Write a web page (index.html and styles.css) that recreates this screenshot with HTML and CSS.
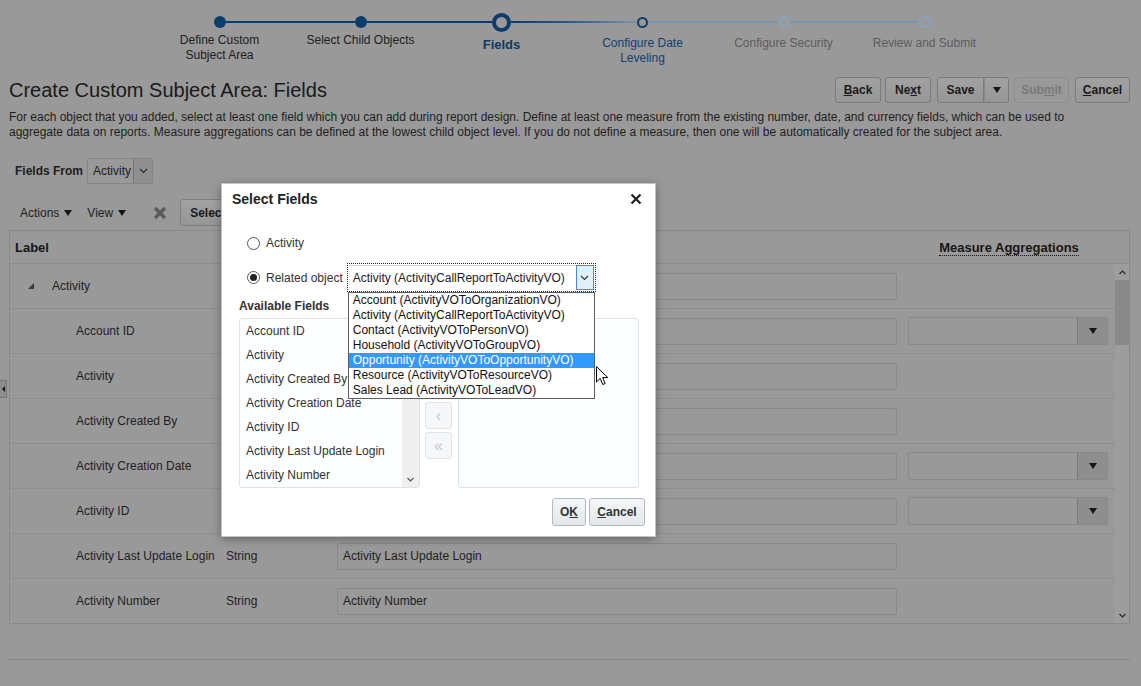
FILE: index.html
```html
<!DOCTYPE html>
<html lang="en">
<head>
  <meta charset="UTF-8">
  <title>Create Custom Subject Area: Fields</title>
  <link rel="stylesheet" href="styles.css">
</head>
<body>

  <!-- Train -->
  <div class="train">
    <div class="step">
      <div class="track"><span class="line none"></span><span class="dot done"></span><span class="line dark"></span></div>
      <div class="step-label done">Define Custom<br>Subject Area</div>
    </div>
    <div class="step">
      <div class="track"><span class="line dark"></span><span class="dot done"></span><span class="line dark"></span></div>
      <div class="step-label done">Select Child Objects</div>
    </div>
    <div class="step">
      <div class="track"><span class="line dark"></span><span class="dot current"></span><span class="line fade-out"></span></div>
      <div class="step-label current">Fields</div>
    </div>
    <div class="step">
      <div class="track"><span class="line fade-in"></span><span class="dot next"></span><span class="line light"></span></div>
      <div class="step-label next">Configure Date<br>Leveling</div>
    </div>
    <div class="step">
      <div class="track"><span class="line light"></span><span class="dot todo"></span><span class="line light"></span></div>
      <div class="step-label todo">Configure Security</div>
    </div>
    <div class="step">
      <div class="track"><span class="line light"></span><span class="dot todo"></span><span class="line none"></span></div>
      <div class="step-label todo">Review and Submit</div>
    </div>
  </div>

  <!-- Header -->
  <div class="page-head">
    <h1>Create Custom Subject Area: Fields</h1>
    <div class="head-buttons">
      <button class="btn back"><u>B</u>ack</button>
      <button class="btn next">Ne<u>x</u>t</button>
      <div class="split">
        <button class="btn split-main">Save</button>
        <button class="btn split-arrow"><span class="caret"></span></button>
      </div>
      <button class="btn disabled">Sub<u>m</u>it</button>
      <button class="btn cancel"><u>C</u>ancel</button>
    </div>
  </div>

  <p class="desc">For each object that you added, select at least one field which you can add during report design. Define at least one measure from the existing number, date, and currency fields, which can be used to aggregate data on reports. Measure aggregations can be defined at the lowest child object level. If you do not define a measure, then one will be automatically created for the subject area.</p>

  <div class="fields-from">
    <span class="lbl">Fields From</span>
    <div class="choice">
      <span>Activity</span>
      <span class="choice-btn"><svg width="9" height="6" viewBox="0 0 9 6"><polyline points="1,1 4.5,4.5 8,1" fill="none" stroke="#2a2a2a" stroke-width="1.1"/></svg></span>
    </div>
  </div>

  <div class="toolbar">
    <span class="menu">Actions<span class="caret"></span></span>
    <span class="menu">View<span class="caret"></span></span>
    <svg class="del" width="14" height="14" viewBox="0 0 14 14"><path d="M2 2L12 12M12 2L2 12" stroke="#5a5a5a" stroke-width="3.2"/></svg>
    <button class="tool-btn">Select Fields</button>
  </div>

  <!-- Fields table -->
  <div class="grid">
    <div class="grid-head">
      <div class="hcell">Label</div>
      <div class="hcell">Type</div>
      <div class="hcell">Display Label</div>
      <div class="hcell center"><span class="dotted">Measure Aggregations</span></div>
      <div></div>
    </div>
    <div class="grid-body">
      <div class="rows">
        <div class="row">
          <div class="cell parent"><span class="tri"></span>Activity</div>
          <div class="cell type"></div>
          <div class="cell"><div class="textbox">Activity</div></div>
          <div class="cell"></div>
        </div>
        <div class="row">
          <div class="cell child">Account ID</div>
          <div class="cell type">Number</div>
          <div class="cell"><div class="textbox">Account ID</div></div>
          <div class="cell"><div class="agg"><span class="agg-btn"><span class="caret"></span></span></div></div>
        </div>
        <div class="row">
          <div class="cell child">Activity</div>
          <div class="cell type">String</div>
          <div class="cell"><div class="textbox">Activity</div></div>
          <div class="cell"></div>
        </div>
        <div class="row">
          <div class="cell child">Activity Created By</div>
          <div class="cell type">String</div>
          <div class="cell"><div class="textbox">Activity Created By</div></div>
          <div class="cell"></div>
        </div>
        <div class="row">
          <div class="cell child">Activity Creation Date</div>
          <div class="cell type">Date</div>
          <div class="cell"><div class="textbox">Activity Creation Date</div></div>
          <div class="cell"><div class="agg"><span class="agg-btn"><span class="caret"></span></span></div></div>
        </div>
        <div class="row">
          <div class="cell child">Activity ID</div>
          <div class="cell type">Number</div>
          <div class="cell"><div class="textbox">Activity ID</div></div>
          <div class="cell"><div class="agg"><span class="agg-btn"><span class="caret"></span></span></div></div>
        </div>
        <div class="row">
          <div class="cell child">Activity Last Update Login</div>
          <div class="cell type">String</div>
          <div class="cell"><div class="textbox">Activity Last Update Login</div></div>
          <div class="cell"></div>
        </div>
        <div class="row">
          <div class="cell child">Activity Number</div>
          <div class="cell type">String</div>
          <div class="cell"><div class="textbox">Activity Number</div></div>
          <div class="cell"></div>
        </div>
      </div>
      <div class="vbar">
        <span class="vbar-arrow"><svg width="7" height="5" viewBox="0 0 7 5"><polyline points="0.5,4 3.5,1 6.5,4" fill="none" stroke="#2a2a2a" stroke-width="1.2"/></svg></span>
        <span class="vbar-thumb"></span>
        <span class="vbar-fill"></span>
        <span class="vbar-arrow"><svg width="7" height="5" viewBox="0 0 7 5"><polyline points="0.5,1 3.5,4 6.5,1" fill="none" stroke="#2a2a2a" stroke-width="1.2"/></svg></span>
      </div>
    </div>
  </div>

  <div class="footer-rule"></div>

  <div class="edge-tab"><span class="edge-tri"></span></div>

  <!-- Select Fields dialog -->
  <div class="dialog">
    <div class="dlg-head">
      <span class="dlg-title">Select Fields</span>
      <svg width="12" height="12" viewBox="0 0 12 12"><path d="M1.5 1.5L10.5 10.5M10.5 1.5L1.5 10.5" stroke="#222" stroke-width="2.3"/></svg>
    </div>
    <div class="dlg-body">
      <div class="radio-row first"><span class="radio"></span>Activity</div>
      <div class="radio-row related">
        <span class="radio on"></span>Related object
        <div class="combo-wrap">
          <div class="combo">
            <span class="combo-text">Activity (ActivityCallReportToActivityVO)</span>
            <span class="combo-btn"><svg width="9" height="6" viewBox="0 0 9 6"><polyline points="1,1 4.5,4.5 8,1" fill="none" stroke="#333" stroke-width="1.1"/></svg></span>
          </div>
          <ul class="combo-list">
            <li>Account (ActivityVOToOrganizationVO)</li>
            <li>Activity (ActivityCallReportToActivityVO)</li>
            <li>Contact (ActivityVOToPersonVO)</li>
            <li>Household (ActivityVOToGroupVO)</li>
            <li class="hl">Opportunity (ActivityVOToOpportunityVO)</li>
            <li>Resource (ActivityVOToResourceVO)</li>
            <li>Sales Lead (ActivityVOToLeadVO)</li>
          </ul>
        </div>
      </div>

      <div class="avail-title">Available Fields</div>
      <div class="shuttle">
        <div class="listbox avail">
          <ul>
            <li>Account ID</li>
            <li>Activity</li>
            <li>Activity Created By</li>
            <li>Activity Creation Date</li>
            <li>Activity ID</li>
            <li>Activity Last Update Login</li>
            <li>Activity Number</li>
          </ul>
          <div class="vscroll"><svg width="7" height="5" viewBox="0 0 7 5"><polyline points="0.5,1 3.5,4 6.5,1" fill="none" stroke="#555" stroke-width="1.1"/></svg></div>
        </div>
        <div class="shuttle-btns">
          <button class="sbtn">&rsaquo;</button>
          <button class="sbtn">&raquo;</button>
          <button class="sbtn">&lsaquo;</button>
          <button class="sbtn">&laquo;</button>
        </div>
        <div class="listbox chosen"></div>
      </div>

      <div class="dlg-foot">
        <button class="dlg-btn ok">O<u>K</u></button>
        <button class="dlg-btn">Cancel</button>
      </div>
    </div>
  </div>

  <svg class="pointer" width="13" height="20" viewBox="0 0 13 20"><path d="M0.5 0.5L0.5 16L4.2 12.4L6.8 18.5L9.2 17.5L6.7 11.6L11.8 11.6Z" fill="#fff" stroke="#000" stroke-width="1"/></svg>

</body>
</html>
```

FILE: styles.css
```css
* {
  box-sizing: border-box;
}
body {
  margin: 0;
  height: 686px;
  overflow: hidden;
  position: relative;
  background: #999;
  font-family: "Liberation Sans", Arial, sans-serif;
  font-size: 12px;
  color: #1e1e1e;
}

/* train */
.train {
  display: flex;
  height: 68px;
  padding: 10px 0 0 149px;
}
.step {
  width: 141px;
  display: flex;
  flex-direction: column;
  align-items: center;
}
.track {
  display: flex;
  align-items: center;
  width: 100%;
  height: 24px;
}
.line {
  flex: 1;
  height: 2px;
}
.line.dark { background: #0c3c6c; }
.line.fade-out { background: linear-gradient(to right, #0c3c6c, #2f5a86); }
.line.fade-in { background: linear-gradient(to right, #2f5a86, #7a94ae); }
.line.light { background: #7a94ae; }
.dot {
  flex: none;
  border-radius: 50%;
}
.dot.done { width: 12px; height: 12px; background: #0c3c6c; }
.dot.current { width: 19px; height: 19px; border: 4px solid #0c3c6c; background: #999; }
.dot.next { width: 11px; height: 11px; border: 2px solid #0c3c6c; }
.dot.todo { width: 12px; height: 12px; border: 2px solid #8aa4bd; }
.step-label {
  text-align: center;
  line-height: 15px;
  white-space: nowrap;
}
.step-label.done { color: #202020; margin-top: -1px; }
.step-label.current { color: #0e3764; font-weight: bold; font-size: 13px; margin-top: 3px; }
.step-label.next { color: #13406f; margin-top: 2px; }
.step-label.todo { color: #5c5c5c; margin-top: 2px; }

/* header */
.page-head {
  display: flex;
  align-items: center;
  justify-content: space-between;
  padding: 9px 11px 0 9px;
}
.page-head h1 {
  margin: 0;
  font-size: 20px;
  font-weight: normal;
  color: #1a1a1a;
}
.head-buttons {
  display: flex;
  align-items: center;
}
.btn {
  height: 26px;
  margin-left: 6px;
  padding: 0;
  border: 1px solid #7b7b7b;
  border-radius: 3px;
  background: linear-gradient(#a2a2a2, #969696);
  font: bold 12px "Liberation Sans", Arial, sans-serif;
  color: #1a1a1a;
}
.btn.back { width: 46px; }
.btn.next { width: 46px; margin-left: 4px; }
.btn.disabled {
  width: 55px;
  margin-left: 5px;
  color: #7a7a7a;
  border-color: #8d8d8d;
  background: #999;
}
.btn.cancel { width: 55px; }
.split {
  display: flex;
  margin-left: 6px;
}
.split .btn { margin-left: 0; }
.split-main {
  width: 47px;
  border-radius: 3px 0 0 3px;
}
.split-arrow {
  width: 25px;
  border-left-color: #888;
  border-radius: 0 3px 3px 0;
  display: flex;
  align-items: center;
  justify-content: center;
}
.caret {
  display: inline-block;
  width: 0;
  height: 0;
  border-left: 4px solid transparent;
  border-right: 4px solid transparent;
  border-top: 6px solid #161616;
}

.desc {
  max-width: 1100px;
  margin: 7px 11px 0 9px;
  line-height: 15px;
}

.fields-from {
  display: flex;
  align-items: center;
  height: 26px;
  margin: 18px 0 0 15px;
}
.fields-from .lbl {
  font-weight: bold;
  margin-right: 4px;
}
.choice {
  display: flex;
  align-items: center;
  justify-content: space-between;
  width: 66px;
  height: 26px;
  padding-left: 5px;
  border: 1px solid #858585;
  border-radius: 2px;
}
.choice-btn {
  width: 19px;
  height: 24px;
  border-left: 1px solid #767676;
  background: #8f8f8f;
  display: flex;
  align-items: center;
  justify-content: center;
}

.toolbar {
  display: flex;
  align-items: center;
  height: 27px;
  margin: 15px 0 0 20px;
}
.menu {
  display: flex;
  align-items: center;
  margin-right: 15px;
}
.menu .caret { margin-left: 5px; }
.del { margin: 0 13px 0 12px; }
.tool-btn {
  height: 27px;
  padding: 0 9px;
  border: 1px solid #7e7e7e;
  border-radius: 3px;
  background: linear-gradient(#a2a2a2, #969696);
  font: bold 12px "Liberation Sans", Arial, sans-serif;
  color: #1a1a1a;
}

/* table */
.grid {
  margin: 4px 11px 0 9px;
  border: 1px solid #8a8a8a;
}
.grid-head {
  display: grid;
  grid-template-columns: 210px 111px 572px 212px 15px;
  align-items: center;
  height: 33px;
  border-bottom: 1px solid #8c8c8c;
  font-size: 13px;
  font-weight: bold;
  color: #161616;
}
.hcell { padding-left: 5px; }
.hcell.center { text-align: center; padding-left: 0; }
.dotted { border-bottom: 1px dotted #161616; }
.grid-body { display: flex; }
.rows { flex: 1; }
.row {
  display: grid;
  grid-template-columns: 210px 111px 572px 212px;
  align-items: center;
  height: 45px;
  border-bottom: 1px solid #8e8e8e;
}
.row:last-child {
  height: 44px;
  border-bottom: none;
}
.cell.parent {
  display: flex;
  align-items: center;
  padding-left: 18px;
}
.tri {
  width: 0;
  height: 0;
  border-left: 6px solid transparent;
  border-bottom: 6px solid #3a3a3a;
  margin-right: 18px;
}
.cell.child { padding-left: 66px; white-space: nowrap; }
.cell.type { padding-left: 6px; }
.textbox {
  width: 560px;
  height: 27px;
  margin-left: 6px;
  padding-left: 5px;
  line-height: 25px;
  border: 1px solid #898989;
  border-radius: 2px;
}
.agg {
  display: flex;
  justify-content: flex-end;
  width: 200px;
  height: 28px;
  margin-left: 5px;
  border: 1px solid #898989;
  border-radius: 2px;
}
.agg-btn {
  width: 30px;
  border-left: 1px solid #7a7a7a;
  background: #8e8e8e;
  display: flex;
  align-items: center;
  justify-content: center;
}
.vbar {
  width: 15px;
  background: #9d9d9d;
  display: flex;
  flex-direction: column;
}
.vbar-arrow {
  height: 16px;
  display: flex;
  align-items: center;
  justify-content: center;
}
.vbar-thumb {
  height: 65px;
  background: #8a8a8a;
}
.vbar-fill { flex: 1; }

.footer-rule {
  margin: 35px 11px 0 9px;
  border-top: 1px solid #868686;
}

.edge-tab {
  position: absolute;
  left: 0;
  top: 380px;
  width: 7px;
  height: 18px;
  background: #8c8c8c;
  border: 1px solid #767676;
  border-left: none;
  display: flex;
  align-items: center;
  justify-content: center;
}
.edge-tri {
  width: 0;
  height: 0;
  border-top: 3px solid transparent;
  border-bottom: 3px solid transparent;
  border-right: 3px solid #111;
}

/* dialog */
.dialog {
  position: absolute;
  left: 221px;
  top: 183px;
  width: 435px;
  height: 354px;
  background: #fff;
  border: 1px solid #c4c4c4;
  box-shadow: 0 2px 9px rgba(0, 0, 0, 0.35);
  color: #333;
}
.dlg-head {
  display: flex;
  align-items: center;
  justify-content: space-between;
  height: 24px;
  padding: 6px 13px 0 10px;
}
.dlg-title {
  font-size: 14px;
  font-weight: bold;
  line-height: 18px;
  color: #222;
}
.dlg-body { padding: 0 10px 0 17px; }
.radio-row {
  display: flex;
  align-items: center;
  padding-left: 8px;
  white-space: nowrap;
}
.radio-row.first { height: 20px; margin-top: 25px; }
.radio-row.related { height: 29px; margin-top: 10px; }
.radio {
  width: 13px;
  height: 13px;
  margin-right: 6px;
  border: 1px solid #555;
  border-radius: 50%;
  background: #fff;
  display: flex;
  align-items: center;
  justify-content: center;
}
.radio.on::after {
  content: "";
  width: 7px;
  height: 7px;
  border-radius: 50%;
  background: #222;
}
.combo-wrap {
  position: relative;
  margin-left: 4px;
}
.combo {
  display: flex;
  align-items: center;
  width: 249px;
  height: 29px;
  padding: 1px;
  border: 1px dotted #222;
}
.combo-text {
  flex: 1;
  height: 25px;
  line-height: 24px;
  padding-left: 4px;
  border-top: 1px solid #d2d2d2;
  color: #222;
}
.combo-btn {
  width: 18px;
  height: 25px;
  border: 1px solid #3d8ee0;
  background: #e3effb;
  display: flex;
  align-items: center;
  justify-content: center;
}
.combo-list {
  position: absolute;
  left: 1px;
  top: 29px;
  width: 247px;
  margin: 0;
  padding: 0;
  list-style: none;
  background: #fff;
  border: 1px solid #5e5e5e;
  z-index: 2;
}
.combo-list li {
  height: 15px;
  line-height: 15px;
  padding-left: 4px;
  color: #111;
  white-space: nowrap;
}
.combo-list li.hl {
  background: #3399ff;
  color: #fff;
}
.avail-title {
  margin-top: 6px;
  line-height: 16px;
  font-weight: bold;
  color: #333;
}
.shuttle {
  display: flex;
  margin-top: 4px;
  height: 170px;
}
.listbox {
  width: 181px;
  height: 170px;
  border: 1px solid #dde2e6;
  border-radius: 3px;
  background: #fcfdfe;
}
.listbox.avail { display: flex; }
.listbox ul {
  flex: 1;
  margin: 0;
  padding: 0;
  list-style: none;
  overflow: hidden;
}
.listbox li {
  height: 24px;
  line-height: 24px;
  padding-left: 6px;
  white-space: nowrap;
  color: #333;
}
.vscroll {
  width: 17px;
  background: #efefef;
  display: flex;
  align-items: flex-end;
  justify-content: center;
  padding-bottom: 5px;
}
.shuttle-btns {
  display: flex;
  flex-direction: column;
  width: 27px;
  margin-left: 5px;
  padding-top: 24px;
}
.sbtn {
  width: 27px;
  height: 27px;
  margin-bottom: 3px;
  padding: 0;
  border: 1px solid #e1e5e9;
  border-radius: 3px;
  background: #f5f7f9;
  color: #c2c8ce;
  font: 16px "Liberation Sans", Arial, sans-serif;
}
.listbox.chosen { margin-left: 6px; }
.dlg-foot {
  display: flex;
  justify-content: flex-end;
  margin-top: 10px;
}
.dlg-btn {
  width: 56px;
  height: 28px;
  margin-left: 3px;
  padding: 0;
  border: 1px solid #b3b9bf;
  border-radius: 3px;
  background: linear-gradient(#f5f7f9, #e3e7eb);
  font: bold 12px "Liberation Sans", Arial, sans-serif;
  color: #333;
}
.dlg-btn.ok { width: 34px; }
.dlg-btn:last-child::first-letter { text-decoration: underline; }

.pointer {
  position: absolute;
  left: 596px;
  top: 366px;
  z-index: 3;
}
```
